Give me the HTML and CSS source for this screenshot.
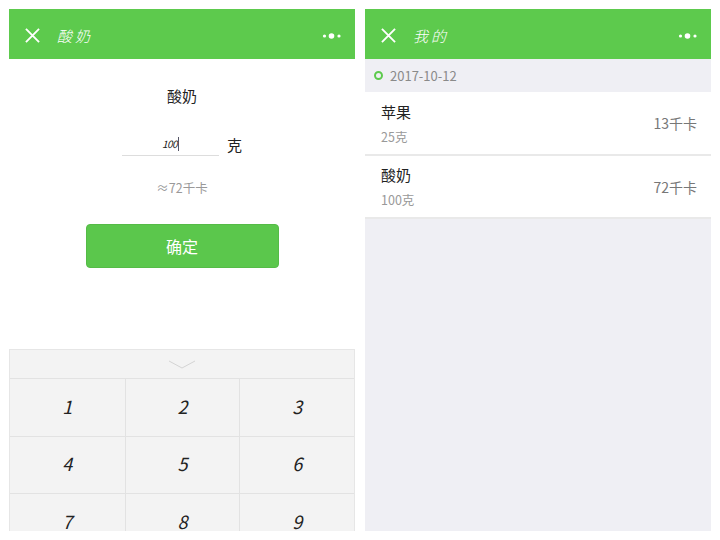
FILE: index.html
```html
<!DOCTYPE html>
<html lang="zh">
<head>
    <meta charset="UTF-8">
    <title>酸奶</title>
    <link rel="stylesheet" href="styles.css">
</head>
<body>
    <div class="screens">
        <div class="screen">
            <header class="bar">
                <svg class="close" width="15" height="15" viewBox="0 0 16 16"><path d="M1 1L15 15M15 1L1 15"/></svg>
                <span class="bar-title">酸奶</span>
                <svg class="more" width="20" height="8" viewBox="0 0 20 8"><circle cx="2.5" cy="4" r="1.6"/><circle cx="9.5" cy="4" r="2.8"/><circle cx="17" cy="4" r="1.6"/></svg>
            </header>
            <div class="form">
                <h2 class="food">酸奶</h2>
                <div class="amount">
                    <div class="amount-input"><span class="amount-value">100</span><i class="caret"></i></div>
                    <span class="unit">克</span>
                </div>
                <p class="estimate">≈72千卡</p>
                <button class="confirm">确定</button>
            </div>
            <div class="keypad">
                <div class="key-hide">
                    <svg width="28" height="9" viewBox="0 0 28 9"><path d="M1 1L14 8L27 1"/></svg>
                </div>
                <div class="keys">
                    <div class="key">1</div>
                    <div class="key">2</div>
                    <div class="key">3</div>
                    <div class="key">4</div>
                    <div class="key">5</div>
                    <div class="key">6</div>
                    <div class="key">7</div>
                    <div class="key">8</div>
                    <div class="key">9</div>
                </div>
            </div>
        </div>
        <div class="screen screen-list">
            <header class="bar">
                <svg class="close" width="15" height="15" viewBox="0 0 16 16"><path d="M1 1L15 15M15 1L1 15"/></svg>
                <span class="bar-title">我的</span>
                <svg class="more" width="20" height="8" viewBox="0 0 20 8"><circle cx="2.5" cy="4" r="1.6"/><circle cx="9.5" cy="4" r="2.8"/><circle cx="17" cy="4" r="1.6"/></svg>
            </header>
            <div class="date"><i class="dot"></i>2017-10-12</div>
            <div class="item">
                <div class="item-main">
                    <div class="item-name">苹果</div>
                    <div class="item-amount">25克</div>
                </div>
                <div class="item-kcal">13千卡</div>
            </div>
            <div class="item">
                <div class="item-main">
                    <div class="item-name">酸奶</div>
                    <div class="item-amount">100克</div>
                </div>
                <div class="item-kcal">72千卡</div>
            </div>
        </div>
    </div>
</body>
</html>
```

FILE: styles.css
```css
* {
    box-sizing: border-box;
}
html, body {
    margin: 0;
    padding: 0;
    height: 100%;
    overflow: hidden;
}
body {
    background: #fff;
    font-family: "Noto Sans CJK SC", "Liberation Sans", sans-serif;
    color: #222;
}
.screens {
    display: flex;
    gap: 10px;
    padding: 9px;
    height: 540px;
}
.screen {
    width: 346px;
    height: 522px;
    overflow: hidden;
    background: #fff;
}
.screen-list {
    background: #efeff4;
}
.bar {
    display: flex;
    align-items: center;
    height: 50px;
    padding: 3px 13px 0 16px;
    background: #5dca4d;
    color: #fff;
}
.close {
    fill: none;
    stroke: #fff;
    stroke-width: 2;
}
.bar-title {
    margin-left: 17px;
    font-size: 15px;
    letter-spacing: 3px;
    font-style: italic;
    font-weight: 300;
}
.more {
    margin-left: auto;
    fill: #fff;
}

.form {
    display: flex;
    flex-direction: column;
    align-items: center;
    height: 290px;
    padding-top: 27px;
}
.food {
    margin: 0;
    font-size: 15px;
    font-weight: normal;
    line-height: 20px;
}
.amount {
    display: flex;
    align-items: flex-end;
    margin-top: 21px;
}
.amount-input {
    display: flex;
    justify-content: center;
    align-items: center;
    width: 97px;
    height: 29px;
    padding-top: 5px;
    border-bottom: 1px solid #ddd;
}
.amount-value {
    font-size: 10px;
    font-style: italic;
    letter-spacing: -0.5px;
}
.caret {
    width: 1px;
    height: 14px;
    margin-left: 1px;
    background: #556;
}
.unit {
    margin-left: 8px;
    margin-bottom: -3px;
    font-size: 15px;
    line-height: 28px;
}
.estimate {
    margin: 23px 0 0;
    font-size: 12.5px;
    line-height: 18px;
    color: #999;
}
.confirm {
    width: 193px;
    height: 44px;
    margin-top: 27px;
    border: 1px solid #55bb47;
    border-radius: 4px;
    background: #5bc74c;
    color: #fff;
    font-family: inherit;
    font-size: 16px;
}

.keypad {
    background: #f3f3f3;
    border: 1px solid #e6e6e6;
    border-bottom: none;
}
.key-hide {
    display: flex;
    justify-content: center;
    align-items: center;
    height: 28px;
    padding-top: 1px;
}
.key-hide svg {
    fill: none;
    stroke: #d4d4d4;
}
.keys {
    display: grid;
    grid-template-columns: repeat(3, 1fr);
    grid-auto-rows: 57.5px;
}
.key {
    display: flex;
    justify-content: center;
    align-items: center;
    padding-bottom: 3px;
    border-top: 1px solid #e2e2e2;
    border-left: 1px solid #e2e2e2;
    font-size: 18px;
    font-style: italic;
    color: #222;
}
.key:nth-child(3n+1) {
    border-left: none;
}

.date {
    display: flex;
    align-items: center;
    height: 33px;
    padding-left: 9px;
    font-size: 13px;
    color: #8a8a8a;
}
.dot {
    width: 9px;
    height: 9px;
    margin-right: 7px;
    border: 2px solid #5dca4d;
    border-radius: 50%;
}
.item {
    display: flex;
    justify-content: space-between;
    align-items: center;
    height: 64px;
    padding: 0 14px 0 16px;
    background: #fff;
    border-bottom: 2px solid #e9e9e9;
}
.item + .item {
    height: 63px;
}
.item-name {
    font-size: 15px;
    line-height: 22px;
    color: #222;
}
.item-amount {
    margin-top: 5px;
    font-size: 12.5px;
    line-height: 18px;
    color: #999;
}
.item-kcal {
    font-size: 14px;
    color: #777;
}
```
